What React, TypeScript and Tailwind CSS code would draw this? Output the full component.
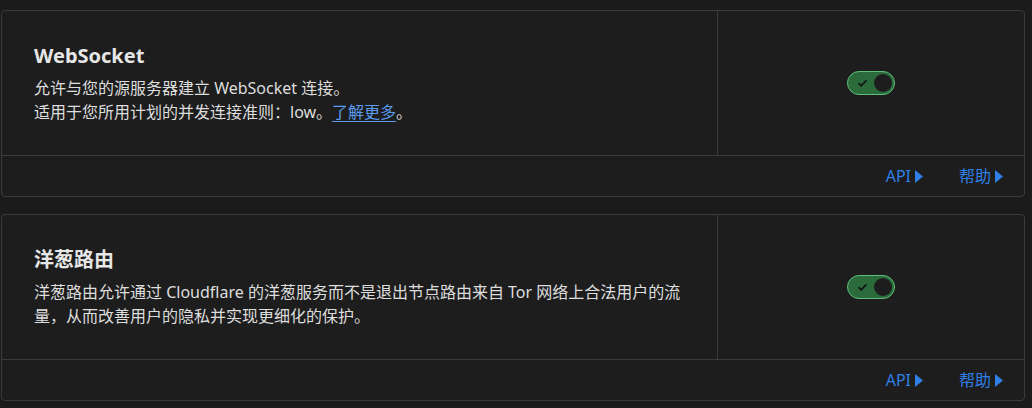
import React from "react";

const font = { fontFamily: '"Noto Sans", "Noto Sans CJK SC", sans-serif' };

function Toggle() {
  return (
    <div className="relative h-[24px] w-[48px] rounded-full border-[1.5px] border-[#5fbf78] bg-[#2b6b3b]">
      <svg
        className="absolute left-[9px] top-[6px]"
        width="11"
        height="10"
        viewBox="0 0 11 10"
        fill="none"
      >
        <path d="M1.5 5.2 L4.2 7.8 L9.5 2.2" stroke="#111" strokeWidth="1.6" />
      </svg>
      <div className="absolute right-[2px] top-[1.5px] h-[18px] w-[18px] rounded-full bg-[#1d1d1d]" />
    </div>
  );
}

function FooterLink({ label }: { label: string }) {
  return (
    <a className="flex items-center gap-[4px] text-[16px] text-[#2f7fe6]">
      {label}
      <svg width="8" height="13" viewBox="0 0 8 13">
        <path d="M0 0 L8 6.5 L0 13 Z" fill="#2f7fe6" />
      </svg>
    </a>
  );
}

function SettingCard({
  title,
  children,
}: {
  title: string;
  children: React.ReactNode;
}) {
  return (
    <div className="rounded-[4px] border border-[#3b3b3b] bg-[#1d1d1d]">
      <div className="flex h-[145px] border-b border-[#3b3b3b]">
        <div className="flex w-[716px] flex-col justify-center border-r border-[#3b3b3b] pl-[32px] pr-[30px]">
          <h3 className="text-[20px] font-bold leading-[28px] text-[#e6e6e6]">
            {title}
          </h3>
          <div className="mt-[6px] text-[16px] leading-[24px] text-[#dedede]">
            {children}
          </div>
        </div>
        <div className="flex flex-1 items-center justify-center">
          <Toggle />
        </div>
      </div>
      <div className="flex h-[40px] items-center justify-end gap-[36px] pr-[21px]">
        <FooterLink label="API" />
        <FooterLink label="帮助" />
      </div>
    </div>
  );
}

export default function App() {
  return (
    <div
      className="flex h-[408px] w-[1032px] flex-col gap-[17px] bg-[#1b1b1b] pl-[1px] pr-[7px] pt-[10px]"
      style={font}
    >
      <SettingCard title="WebSocket">
        <p>允许与您的源服务器建立 WebSocket 连接。</p>
        <p>
          适用于您所用计划的并发连接准则：low。
          <a className="text-[#5b9cf0] underline underline-offset-[3px]">
            了解更多
          </a>
          。
        </p>
      </SettingCard>
      <SettingCard title="洋葱路由">
        <p>
          洋葱路由允许通过 Cloudflare 的洋葱服务而不是退出节点路由来自 Tor
          网络上合法用户的流量，从而改善用户的隐私并实现更细化的保护。
        </p>
      </SettingCard>
    </div>
  );
}
